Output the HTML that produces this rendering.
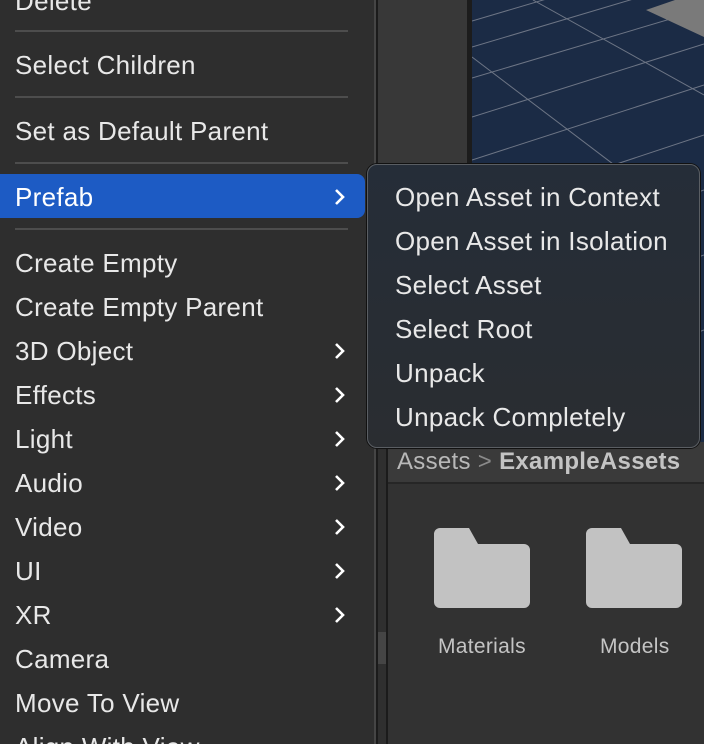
<!DOCTYPE html>
<html><head><meta charset="utf-8"><style>
*{margin:0;padding:0;box-sizing:border-box}
html,body{width:704px;height:744px;overflow:hidden}
body{background:#2e2e2e;position:relative;font-family:"Liberation Sans",sans-serif}
.t{position:absolute;left:15px;height:44px;line-height:44px;font-size:26px;color:#e8e8e8;white-space:nowrap;letter-spacing:0.3px}
.sep{position:absolute;left:15px;width:333px;height:2px;background:#4d4d4d}
.ar{position:absolute;left:333px;width:14px;height:18px}
.s{position:absolute;left:395px;height:44px;line-height:44px;font-size:26px;color:#e8e8e8;white-space:nowrap;letter-spacing:0.3px}
</style></head><body>
<div style="position:absolute;left:0;top:0;width:374px;height:744px;background:#2e2e2e"></div>
<div style="position:absolute;left:374px;top:0;width:2px;height:744px;background:#454545"></div>
<div style="position:absolute;left:376px;top:0;width:2px;height:744px;background:#1b1b1b"></div>
<div style="position:absolute;left:378px;top:0;width:8px;height:744px;background:#2f2f2f"></div>
<div style="position:absolute;left:378px;top:632px;width:8px;height:32px;background:#454545"></div>
<div style="position:absolute;left:386px;top:0;width:2px;height:744px;background:#1b1b1b"></div>
<div style="position:absolute;left:388px;top:0;width:316px;height:744px;background:#323232"></div>
<div style="position:absolute;left:378px;top:0;width:90px;height:444px;background:#383838"></div>
<div style="position:absolute;left:467px;top:0;width:5px;height:444px;background:#1c1c1c"></div>
<svg style="position:absolute;left:472px;top:0" width="232" height="444" viewBox="472 0 232 444">
<rect x="472" y="0" width="232" height="444" fill="#1b2b45"/>
<g stroke="#6d7585" stroke-width="1" fill="none">
<line x1="472" y1="21" x2="560" y2="-5"/>
<line x1="472" y1="47" x2="704" y2="-22"/>
<line x1="472" y1="78" x2="704" y2="9"/>
<line x1="472" y1="117" x2="704" y2="44"/>
<line x1="472" y1="160" x2="704" y2="85"/>
<line x1="472" y1="212" x2="704" y2="135"/>
<line x1="472" y1="270" x2="704" y2="190"/>
<line x1="472" y1="338" x2="704" y2="255"/>
<line x1="472" y1="415" x2="704" y2="330"/>
<line x1="472" y1="57" x2="700" y2="230"/>
<line x1="533" y1="0" x2="704" y2="95"/>
<line x1="470" y1="200" x2="640" y2="444"/>
</g>
<polygon points="646,10 704,-10 704,37" fill="#7a7a7a"/>
</svg>
<div style="position:absolute;left:388px;top:442px;width:316px;height:42px;background:#3a3a3a;border-bottom:2px solid #262626"></div>
<div style="position:absolute;left:397px;top:448px;font-size:24px;color:#b8b8b8;white-space:nowrap;letter-spacing:0.3px">Assets <span style="color:#8a8a8a">&gt;</span> <b style="color:#c4c4c4">ExampleAssets</b></div>
<svg style="position:absolute;left:434px;top:528px" width="96" height="80"><path d="M6 0H35L44 16H90a6 6 0 0 1 6 6V74a6 6 0 0 1-6 6H6a6 6 0 0 1-6-6V6a6 6 0 0 1 6-6Z" fill="#c2c2c2"/></svg>
<svg style="position:absolute;left:586px;top:528px" width="96" height="80"><path d="M6 0H35L44 16H90a6 6 0 0 1 6 6V74a6 6 0 0 1-6 6H6a6 6 0 0 1-6-6V6a6 6 0 0 1 6-6Z" fill="#c2c2c2"/></svg>
<div style="position:absolute;left:438px;top:635px;font-size:21px;color:#c4c4c4;letter-spacing:0.3px">Materials</div>
<div style="position:absolute;left:600px;top:635px;font-size:21px;color:#c4c4c4;letter-spacing:0.3px">Models</div>

<div class="t" style="top:-21px">Delete</div>
<div class="sep" style="top:30px"></div>
<div class="t" style="top:43px">Select Children</div>
<div class="sep" style="top:96px"></div>
<div class="t" style="top:109px">Set as Default Parent</div>
<div class="sep" style="top:162px"></div>
<div style="position:absolute;left:0;top:174px;width:365px;height:44px;background:#1d5bc4;border-radius:0 8px 8px 0"></div>
<div class="t" style="top:175px;color:#fff">Prefab</div>
<div class="sep" style="top:228px"></div>
<div class="t" style="top:241px">Create Empty</div>
<div class="t" style="top:285px">Create Empty Parent</div>
<div class="t" style="top:329px">3D Object</div>
<div class="t" style="top:373px">Effects</div>
<div class="t" style="top:417px">Light</div>
<div class="t" style="top:461px">Audio</div>
<div class="t" style="top:505px">Video</div>
<div class="t" style="top:549px">UI</div>
<div class="t" style="top:593px">XR</div>
<div class="t" style="top:637px">Camera</div>
<div class="t" style="top:681px">Move To View</div>
<div class="t" style="top:725px">Align With View</div>
<svg class="ar" style="top:188px" viewBox="0 0 14 18"><path d="M3 2L10 9L3 16" stroke="#fff" stroke-width="2.6" fill="none"/></svg>
<svg class="ar" style="top:342px" viewBox="0 0 14 18"><path d="M3 2L10 9L3 16" stroke="#fff" stroke-width="2.6" fill="none"/></svg>
<svg class="ar" style="top:386px" viewBox="0 0 14 18"><path d="M3 2L10 9L3 16" stroke="#fff" stroke-width="2.6" fill="none"/></svg>
<svg class="ar" style="top:430px" viewBox="0 0 14 18"><path d="M3 2L10 9L3 16" stroke="#fff" stroke-width="2.6" fill="none"/></svg>
<svg class="ar" style="top:474px" viewBox="0 0 14 18"><path d="M3 2L10 9L3 16" stroke="#fff" stroke-width="2.6" fill="none"/></svg>
<svg class="ar" style="top:518px" viewBox="0 0 14 18"><path d="M3 2L10 9L3 16" stroke="#fff" stroke-width="2.6" fill="none"/></svg>
<svg class="ar" style="top:562px" viewBox="0 0 14 18"><path d="M3 2L10 9L3 16" stroke="#fff" stroke-width="2.6" fill="none"/></svg>
<svg class="ar" style="top:606px" viewBox="0 0 14 18"><path d="M3 2L10 9L3 16" stroke="#fff" stroke-width="2.6" fill="none"/></svg>

<div style="position:absolute;left:367px;top:164px;width:333px;height:284px;border-radius:10px;background:linear-gradient(#252d38,#2a2d31);border:1.5px solid #5a5e63;box-shadow:0 0 0 1px #111"></div>
<div class="s" style="top:175px">Open Asset in Context</div>
<div class="s" style="top:219px">Open Asset in Isolation</div>
<div class="s" style="top:263px">Select Asset</div>
<div class="s" style="top:307px">Select Root</div>
<div class="s" style="top:351px">Unpack</div>
<div class="s" style="top:395px">Unpack Completely</div>
</body></html>
